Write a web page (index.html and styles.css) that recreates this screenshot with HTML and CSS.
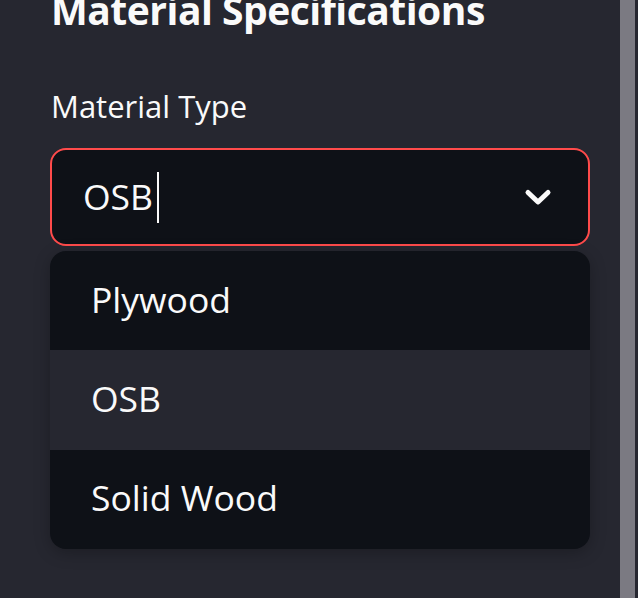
FILE: index.html
```html
<!DOCTYPE html>
<html lang="en">
<head>
<meta charset="utf-8">
<title>Material Specifications</title>
<link rel="stylesheet" href="styles.css">
</head>
<body>
<div class="app">
  <aside class="sidebar">
    <h2 class="title">Material Specifications</h2>
    <label class="field-label">Material Type</label>
    <div class="select">
      <span class="select-value">OSB</span><span class="caret"></span>
      <svg class="chevron" width="28" height="18" viewBox="0 0 28 18" aria-hidden="true">
        <path d="M4 4.5 L14 14 L24 4.5" fill="none" stroke="#fafafa" stroke-width="5" stroke-linecap="round" stroke-linejoin="round"/>
      </svg>
    </div>
    <ul class="menu">
      <li class="option">Plywood</li>
      <li class="option active">OSB</li>
      <li class="option">Solid Wood</li>
    </ul>
  </aside>
  <div class="scroll-track"><div class="scroll-thumb"></div></div>
</div>
</body>
</html>
```

FILE: styles.css
```css
html, body {
  margin: 0;
  padding: 0;
  height: 100%;
  background: #262730;
  overflow: hidden;
}

.app {
  display: flex;
  height: 598px;
  background: #262730;
  font-family: "Open Sans", "Noto Sans", sans-serif;
  color: #fafafa;
}

.sidebar {
  flex: 1;
  display: flex;
  flex-direction: column;
  padding: 0 30px 0 50px;
}

.title {
  margin: -14px 0 0 1px;
  font-size: 39px;
  line-height: 48px;
  font-weight: 700;
  letter-spacing: -0.5px;
  color: #fafafa;
  white-space: nowrap;
}

.field-label {
  margin-top: 52px;
  margin-left: 1px;
  font-size: 31px;
  line-height: 40px;
  color: #fafafa;
}

.select {
  margin-top: 22px;
  height: 98px;
  box-sizing: border-box;
  border: 2px solid #ff4b4b;
  border-radius: 16px;
  background: #0e1117;
  display: flex;
  align-items: center;
  padding: 0 36px 3px 31px;
}

.select-value {
  font-size: 35.5px;
  line-height: 44px;
}

.caret {
  width: 2px;
  height: 51px;
  margin-left: 4px;
  margin-top: 3px;
  background: #fafafa;
}

.chevron {
  margin-left: auto;
  margin-top: 2px;
}

.menu {
  list-style: none;
  margin: 5px 0 0 0;
  padding: 0;
  height: 298px;
  display: flex;
  flex-direction: column;
  background: #0e1117;
  border-radius: 16px;
  overflow: hidden;
  box-shadow: 0 4px 16px rgba(0, 0, 0, 0.25);
}

.option {
  flex: 1;
  display: flex;
  align-items: center;
  padding: 0 0 4px 41px;
  font-size: 35.5px;
  line-height: 44px;
}

.option.active {
  background: #262730;
}

.scroll-track {
  width: 18px;
  background: #262730;
}

.scroll-thumb {
  width: 15px;
  height: 100%;
  background: #7b7a82;
}
```
